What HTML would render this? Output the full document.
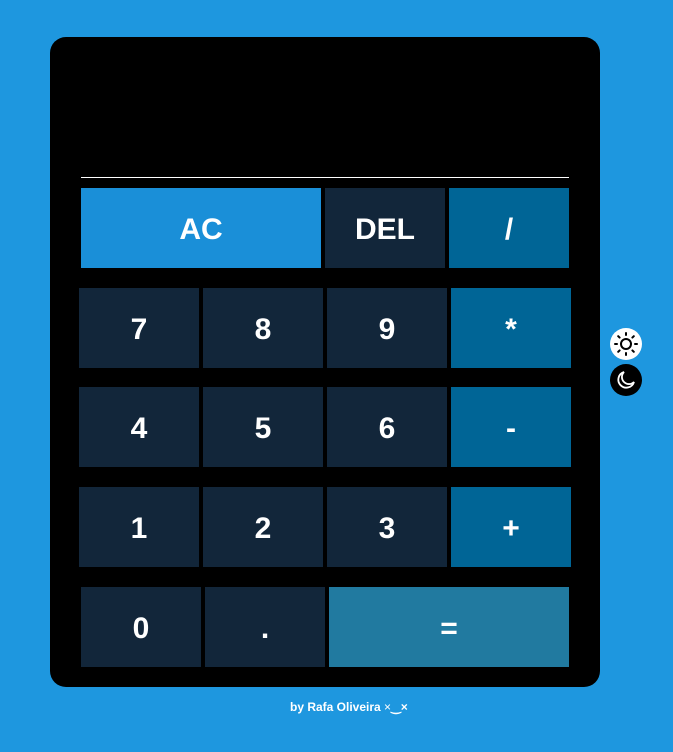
<!DOCTYPE html><html><head><style>
body{margin:0;width:673px;height:752px;background:#1e97df;font-family:"Liberation Sans",sans-serif;position:relative;overflow:hidden}
.card{position:absolute;left:50px;top:37px;width:550px;height:650px;background:#000;border-radius:16px}
.line{position:absolute;left:81px;top:177px;width:488px;height:1px;background:#fff}
.b{position:absolute;width:120px;height:80px;box-sizing:border-box;padding-top:3px;background:#12263a;color:#fff;font-weight:bold;font-size:30px;display:flex;align-items:center;justify-content:center}
.op{background:#006596}
.ft{position:absolute;top:700px;left:290px;color:#fff;font-size:12px;font-weight:bold;white-space:nowrap}
.ic{position:absolute;left:610px;width:32px;height:32px;border-radius:50%}
</style></head><body>
<div class="card"></div><div class="line"></div>
<div class="b" style="left:81px;top:188px;width:240px;background:#1a8fd8">AC</div>
<div class="b" style="left:325px;top:188px">DEL</div>
<div class="b op" style="left:449px;top:188px">/</div>
<div class="b" style="left:79px;top:288px">7</div><div class="b" style="left:203px;top:288px">8</div><div class="b" style="left:327px;top:288px">9</div><div class="b op" style="left:451px;top:288px">*</div>
<div class="b" style="left:79px;top:387px">4</div><div class="b" style="left:203px;top:387px">5</div><div class="b" style="left:327px;top:387px">6</div><div class="b op" style="left:451px;top:387px">-</div>
<div class="b" style="left:79px;top:487px">1</div><div class="b" style="left:203px;top:487px">2</div><div class="b" style="left:327px;top:487px">3</div><div class="b op" style="left:451px;top:487px">+</div>
<div class="b" style="left:81px;top:587px">0</div><div class="b" style="left:205px;top:587px">.</div><div class="b" style="left:329px;top:587px;width:240px;background:#217aa0">=</div>
<div class="ic" style="top:328px;background:#fff"><svg width="32" height="32" viewBox="0 0 32 32" fill="none" stroke="#000" stroke-width="2" stroke-linecap="round"><circle cx="16" cy="16" r="5"/><path d="M16 5v2M16 25v2M5 16h2M25 16h2M8.2 8.2l1.4 1.4M22.4 22.4l1.4 1.4M8.2 23.8l1.4-1.4M22.4 9.6l1.4-1.4"/></svg></div>
<div class="ic" style="top:364px;background:#000"><svg width="32" height="32" viewBox="0 0 32 32" fill="none" stroke="#fff" stroke-width="1.8"><path d="M14 8a8 8 0 1 0 10 10a7 7 0 0 1-10-10z"/></svg></div>
<div class="ft">by Rafa Oliveira <span style="font-weight:normal">×</span>‿×</div>
</body></html>
